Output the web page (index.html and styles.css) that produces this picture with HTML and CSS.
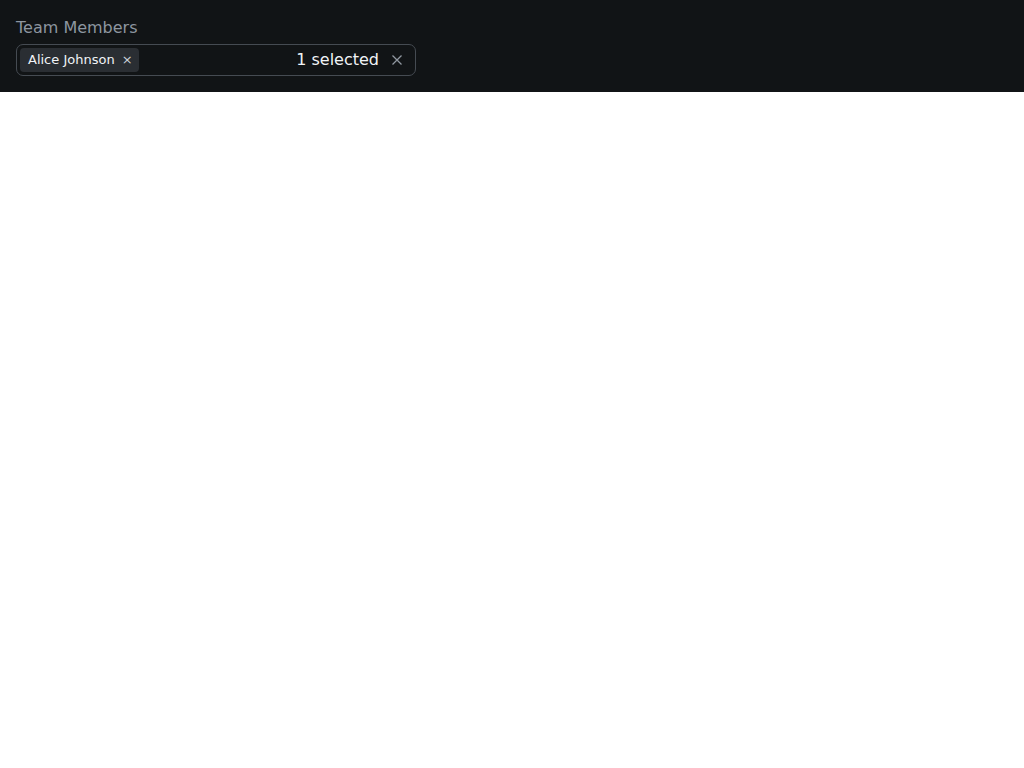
FILE: index.html
```html
<!DOCTYPE html>
<html lang="en">
<head>
<meta charset="utf-8">
<title>Team Members</title>
<link rel="stylesheet" href="styles.css">
</head>
<body>
<div class="panel">
  <label class="field-label">Team Members</label>
  <div class="multiselect">
    <div class="chips">
      <span class="chip">Alice Johnson <span class="chip-x">×</span></span>
    </div>
    <span class="count">1 selected</span>
    <button class="clear" aria-label="Clear">
      <svg width="12" height="12" viewBox="0 0 12 12"><path d="M1.5 1.5l9 9M10.5 1.5l-9 9" stroke="currentColor" stroke-width="1.3" fill="none"/></svg>
    </button>
  </div>
</div>
</body>
</html>
```
FILE: styles.css
```css
html, body {
  margin: 0;
  padding: 0;
  background: #ffffff;
  font-family: "DejaVu Sans", sans-serif;
}
.panel {
  background: #111416;
  padding: 17px 16px 16px 16px;
  height: 59px;
}
.field-label {
  display: block;
  color: #8d96a0;
  font-size: 16px;
  line-height: 22px;
  margin-bottom: 5px;
}
.multiselect {
  height: 30px;
  border: 1px solid #454b52;
  border-radius: 7px;
  display: flex;
  align-items: center;
  padding: 0 12px 0 3px;
  box-sizing: content-box;
  width: 383px;
}
.chips {
  flex: 1;
  display: flex;
  gap: 4px;
}
.chip {
  background: #2a2e33;
  color: #f0f3f6;
  font-size: 13px;
  border-radius: 4px;
  padding: 0 6px 0 8px;
  height: 24px;
  line-height: 24px;
  display: inline-flex;
  align-items: center;
  gap: 7px;
}
.chip-x {
  color: #c9d1d9;
  font-size: 13px;
}
.count {
  color: #f0f3f6;
  font-size: 16px;
  margin-right: 12px;
  padding-bottom: 2px;
}
.clear {
  background: none;
  border: 0;
  padding: 0;
  color: #9198a1;
  display: flex;
  align-items: center;
}
```
